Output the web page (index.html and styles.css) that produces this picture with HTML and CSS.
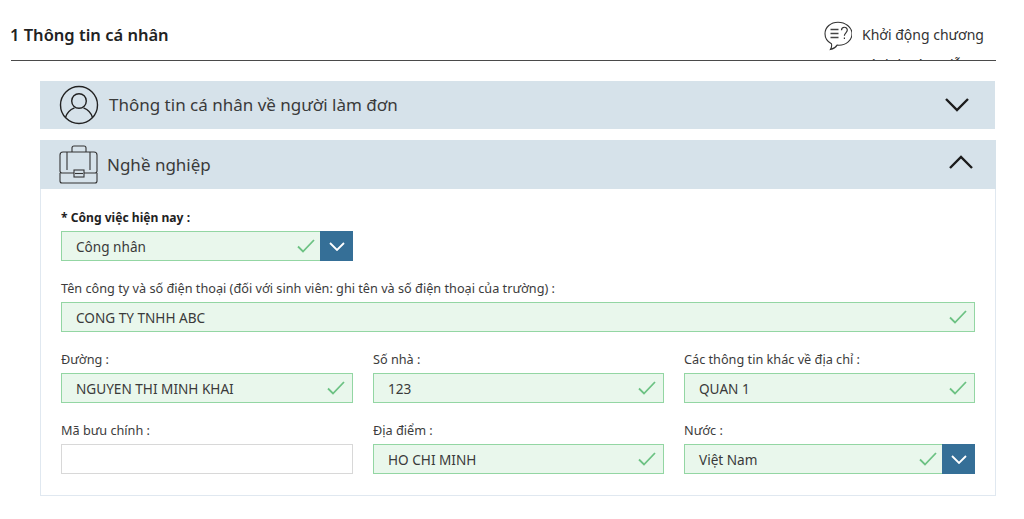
FILE: index.html
```html
<!DOCTYPE html>
<html lang="vi">
<head>
<meta charset="utf-8">
<title>Thông tin cá nhân</title>
<link rel="stylesheet" href="styles.css">
</head>
<body>
<svg class="sprite" width="0" height="0" aria-hidden="true">
  <symbol id="check" viewBox="0 0 18 14"><path d="M1 7.5 L6 12.5 L17 1" fill="none" stroke="#6cc283" stroke-width="1.8"/></symbol>
  <symbol id="caret" viewBox="0 0 16 9"><path d="M1 1 L8 8 L15 1" fill="none" stroke="#fff" stroke-width="1.8"/></symbol>
</svg>
<header class="top">
  <h1 class="title">1 Thông tin cá nhân</h1>
  <div class="help">
    <svg class="help-icon" viewBox="0 0 28 30" aria-hidden="true">
      <path d="M14 1.2C6.8 1.2 1 6.2 1 12.7c0 4.3 2.6 8 6.4 10 .5 1.6.3 3.6-1 5.8 3-.6 5.400-2.300 6.700-4.400.6.1 1.200.1 1.900.1 7.200 0 13-5 13-11.500S21.200 1.200 14 1.200z" fill="none" stroke="#333" stroke-width="1.100"/>
      <path d="M6.500 8.500h8M6.500 12.500h8M6.500 16.500h8" stroke="#444" stroke-width="1.300" fill="none"/>
      <path d="M17.500 9.300c0-4 5.800-4 5.800-.2 0 2.700-2.900 2.800-2.900 5.600M20.400 16.400v1.500" stroke="#333" stroke-width="1.200" fill="none"/>
    </svg>
    <p class="help-text">Khởi động chương trình hướng dẫn</p>
  </div>
</header>

<main class="content">
  <section class="bar bar-first">
    <svg class="bar-icon" viewBox="0 0 40 40" aria-hidden="true">
      <circle cx="20" cy="20" r="18.500" fill="none" stroke="#222" stroke-width="1.400"/>
      <circle cx="20" cy="16" r="7.300" fill="none" stroke="#222" stroke-width="1.400"/>
      <path d="M6.500 32.500c1.500-5.500 6-8.500 9-9.700M33.500 32.500c-1.500-5.500-6-8.500-9-9.700" fill="none" stroke="#222" stroke-width="1.400"/>
    </svg>
    <h2 class="bar-title">Thông tin cá nhân về người làm đơn</h2>
    <svg class="bar-chevron" viewBox="0 0 26 16" aria-hidden="true"><path d="M2 2 L13 13 L24 2" fill="none" stroke="#1c1c1c" stroke-width="2.400"/></svg>
  </section>

  <div class="panel">
    <section class="bar bar-open">
      <svg class="bar-icon" viewBox="0 0 40 40" aria-hidden="true">
        <path d="M13 7V3Q13 1 15 1H25Q27 1 27 3V7" fill="none" stroke="#333" stroke-width="1.100"/>
        <path d="M15 28H3Q1 28 1 26V10Q1 7 4 7H35Q38 7 38 10V26Q38 28 36 28H25" fill="none" stroke="#333" stroke-width="1.100"/>
        <path d="M8 7V25M31 7V25" stroke="#333" stroke-width="1.100" fill="none"/>
        <path d="M1 28V36Q1 38 3 38H36Q38 38 38 36V28" fill="none" stroke="#333" stroke-width="1.100"/>
        <rect x="15" y="25" width="10" height="7" fill="none" stroke="#333" stroke-width="1.100"/>
        <path d="M16 28.500H24" stroke="#333" stroke-width="1.100"/>
      </svg>
      <h2 class="bar-title">Nghề nghiệp</h2>
      <svg class="bar-chevron chevron-up" viewBox="0 0 26 16" aria-hidden="true"><path d="M2 14 L13 3 L24 14" fill="none" stroke="#1c1c1c" stroke-width="2.400"/></svg>
    </section>

    <div class="form">
      <div class="grid">
        <div class="field">
          <label class="label label-strong">* Công việc hiện nay :</label>
          <div class="control valid"><span class="value">Công nhân</span><svg class="check"><use href="#check"/></svg><span class="drop"><svg class="caret"><use href="#caret"/></svg></span></div>
        </div>
      </div>
      <div class="field">
        <label class="label">Tên công ty và số điện thoại (đối với sinh viên: ghi tên và số điện thoại của trường) :</label>
        <div class="control valid"><span class="value">CONG TY TNHH ABC</span><svg class="check"><use href="#check"/></svg></div>
      </div>
      <div class="grid">
        <div class="field">
          <label class="label">Đường :</label>
          <div class="control valid"><span class="value">NGUYEN THI MINH KHAI</span><svg class="check"><use href="#check"/></svg></div>
        </div>
        <div class="field">
          <label class="label">Số nhà :</label>
          <div class="control valid"><span class="value">123</span><svg class="check"><use href="#check"/></svg></div>
        </div>
        <div class="field">
          <label class="label">Các thông tin khác về địa chỉ :</label>
          <div class="control valid"><span class="value">QUAN 1</span><svg class="check"><use href="#check"/></svg></div>
        </div>
      </div>
      <div class="grid">
        <div class="field">
          <label class="label">Mã bưu chính :</label>
          <div class="control"></div>
        </div>
        <div class="field">
          <label class="label">Địa điểm :</label>
          <div class="control valid"><span class="value">HO CHI MINH</span><svg class="check"><use href="#check"/></svg></div>
        </div>
        <div class="field">
          <label class="label">Nước :</label>
          <div class="control valid"><span class="value">Việt Nam</span><svg class="check"><use href="#check"/></svg><span class="drop"><svg class="caret"><use href="#caret"/></svg></span></div>
        </div>
      </div>
    </div>
  </div>
</main>
</body>
</html>
```
FILE: styles.css
```css
* { box-sizing: border-box; }
html, body { margin: 0; padding: 0; }
body {
  width: 1024px;
  height: 519px;
  overflow: hidden;
  background: #fff;
  font-family: "Noto Sans", "Open Sans", sans-serif;
  color: #333;
}
.sprite { display: block; height: 0; }
.top {
  margin: 0 28px 0 11px;
  height: 61px;
  border-bottom: 1px solid #4a4a4a;
  display: flex;
  justify-content: space-between;
}
.title {
  margin: 0 0 0 -1px;
  padding-top: 24px;
  font-size: 16.500px;
  line-height: 22px;
  font-weight: 600;
  color: #222;
}
.help {
  width: 172px;
  height: 60px;
  overflow: hidden;
  display: flex;
  gap: 10px;
  padding-top: 21px;
}
.help-icon { width: 28px; height: 30px; flex: none; }
.help-text {
  margin: -1px 0 0;
  width: 126px;
  font-size: 14px;
  line-height: 30px;
  color: #333;
}
.content {
  margin: 20px 28px 0 40px;
}
.bar {
  background: #d6e2ea;
  display: flex;
  align-items: center;
  height: 49px;
}
.bar-first { width: 955px; height: 48px; padding-left: 19px; }
.panel {
  margin-top: 11px;
  height: 356px;
  border: 1px solid #e0e8f0;
  border-top: 0;
}
.bar-open {
  margin: 0 -1px;
  padding-left: 19px;
}
.bar-icon { width: 40px; height: 40px; flex: none; }
.bar-first .bar-title { margin-left: 10px; }
.bar-open .bar-title { margin-left: 8px; }
.bar-title {
  margin: 0;
  flex: 1;
  font-size: 17px;
  font-weight: 400;
  line-height: 24px;
  color: #3a3a3a;
}
.bar-chevron { width: 26px; height: 16px; flex: none; margin-right: 25px; }
.chevron-up { margin-right: 22px; margin-bottom: 5px; }
.form {
  padding: 16px 20px 0 20px;
  display: flex;
  flex-direction: column;
  gap: 15px;
}
.grid {
  display: grid;
  grid-template-columns: 292px 291px 291px;
  column-gap: 20px;
}
.field { display: flex; flex-direction: column; gap: 1px; }
.label {
  font-size: 12.700px;
  line-height: 25px;
  height: 25px;
  color: #3c3c3c;
}
.label-strong { font-size: 12.100px; font-weight: 700; color: #222; }
.control {
  height: 30px;
  background: #fff;
  border: 1px solid #d8d8d8;
  display: flex;
  align-items: center;
}
.valid {
  background: #e9f7ec;
  border-color: #93d6a3;
}
.value {
  flex: 1;
  padding-left: 14px;
  font-size: 13.600px;
  color: #3a3a3a;
}
.check { width: 18px; height: 14px; flex: none; margin-right: 7px; }
.drop {
  width: 33px;
  height: 30px;
  margin: -1px -1px -1px -2px;
  background: #356f97;
  display: flex;
  align-items: center;
  justify-content: center;
  flex: none;
}
.caret { width: 16px; height: 9px; }
```
